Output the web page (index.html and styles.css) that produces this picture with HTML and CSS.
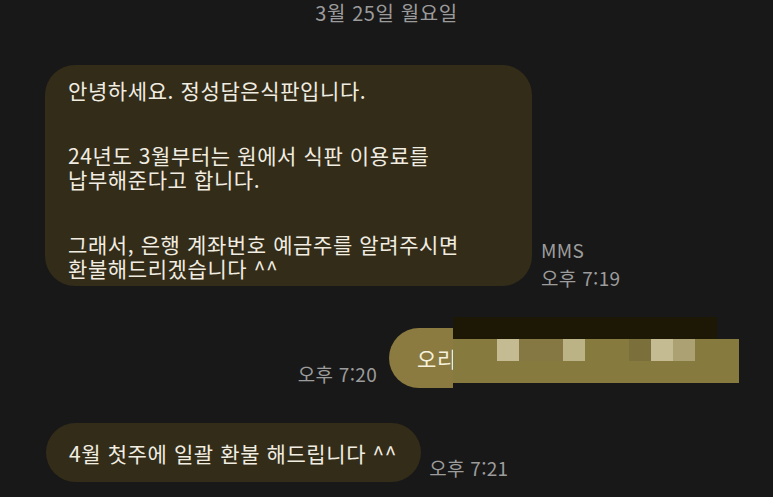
FILE: index.html
```html
<!DOCTYPE html>
<html lang="ko">
<head>
<meta charset="utf-8">
<title>메시지</title>
<link rel="stylesheet" href="styles.css">
</head>
<body>
<div class="chat">
  <div class="date">3월 25일 월요일</div>

  <div class="row row-in row-first">
    <div class="bubble bubble-in bubble-long">
      <p class="line">안녕하세요. 정성담은식판입니다.</p>
      <p class="line para">24년도 3월부터는 원에서 식판 이용료를<br>납부해준다고 합니다.</p>
      <p class="line para">그래서, 은행 계좌번호 예금주를 알려주시면<br>환불해드리겠습니다 ^^</p>
    </div>
    <div class="meta meta-flush">
      <span>MMS</span>
      <span>오후 7:19</span>
    </div>
  </div>

  <div class="row row-out">
    <div class="meta">오후 7:20</div>
    <div class="sent-wrap">
      <div class="bubble bubble-out">오리</div>
      <div class="mosaic">
        <div class="mosaic-top"></div>
        <div class="mosaic-cells">
          <span class="c"></span><span class="c"></span><span class="c l1"></span><span class="c d1"></span><span class="c d1"></span><span class="c l2"></span><span class="c"></span><span class="c"></span><span class="c d2"></span><span class="c l1"></span><span class="c l3"></span><span class="c"></span><span class="c"></span>
        </div>
      </div>
    </div>
  </div>

  <div class="row row-in row-last">
    <div class="bubble bubble-in bubble-short">4월 첫주에 일괄 환불 해드립니다 ^^</div>
    <div class="meta">오후 7:21</div>
  </div>
</div>
</body>
</html>
```
FILE: styles.css
```css
html, body {
  margin: 0;
  padding: 0;
  background: #181818;
}

body {
  width: 773px;
  height: 497px;
  overflow: hidden;
  font-family: "Noto Sans CJK KR", "Noto Sans", sans-serif;
}

.chat {
  display: flex;
  flex-direction: column;
}

.date {
  text-align: center;
  font-size: 20px;
  letter-spacing: 0.6px;
  line-height: 26px;
  color: #9b9b9b;
}

.row {
  display: flex;
  align-items: flex-end;
}

.row-in {
  padding-left: 45px;
}

.row-first {
  margin-top: 39px;
  gap: 9px;
}

.row-out {
  margin-top: 42px;
  justify-content: flex-end;
  padding-right: 34px;
  gap: 12px;
}

.row-last {
  margin-top: 35px;
  gap: 8px;
  padding-left: 46px;
}

.bubble {
  color: #f1ede1;
  font-size: 21px;
  letter-spacing: 0.6px;
  box-sizing: border-box;
}

.bubble-in {
  background: #332c19;
}

.bubble-long {
  width: 487px;
  border-radius: 30px;
  padding: 13px 23px 6px 23px;
}

.line {
  margin: 0;
  line-height: 24px;
  white-space: nowrap;
}

.para {
  margin-top: 41px;
}

.bubble-short {
  height: 59px;
  border-radius: 30px;
  padding: 0 24px 0 23px;
  display: flex;
  align-items: center;
  white-space: nowrap;
}

.meta {
  display: flex;
  flex-direction: column;
  font-size: 19px;
  letter-spacing: 0.3px;
  line-height: 28px;
  color: #9c9c9c;
  white-space: nowrap;
}

.meta-flush {
  margin-bottom: -6px;
}

.sent-wrap {
  position: relative;
  width: 350px;
  height: 60px;
}

.bubble-out {
  width: 64px;
  height: 60px;
  background: #8b7b41;
  border-radius: 30px 0 0 30px;
  color: #f6f1dc;
  font-size: 21px;
  padding-left: 28px;
  display: flex;
  align-items: center;
  white-space: nowrap;
}

.mosaic {
  position: absolute;
  left: 64px;
  top: -11px;
  width: 286px;
  display: flex;
  flex-direction: column;
}

.mosaic-top {
  width: 264px;
  height: 22px;
  background: #1d1806;
}

.mosaic-cells {
  display: grid;
  grid-template-columns: repeat(13, 22px);
  grid-template-rows: 22px;
  height: 44px;
  background: #877a3e;
}

.c {
  display: block;
}

.l1 { background: #c4bb92; }
.l2 { background: #bbb285; }
.l3 { background: #aba173; }
.d1 { background: #857843; }
.d2 { background: #7b6f3b; }
```
